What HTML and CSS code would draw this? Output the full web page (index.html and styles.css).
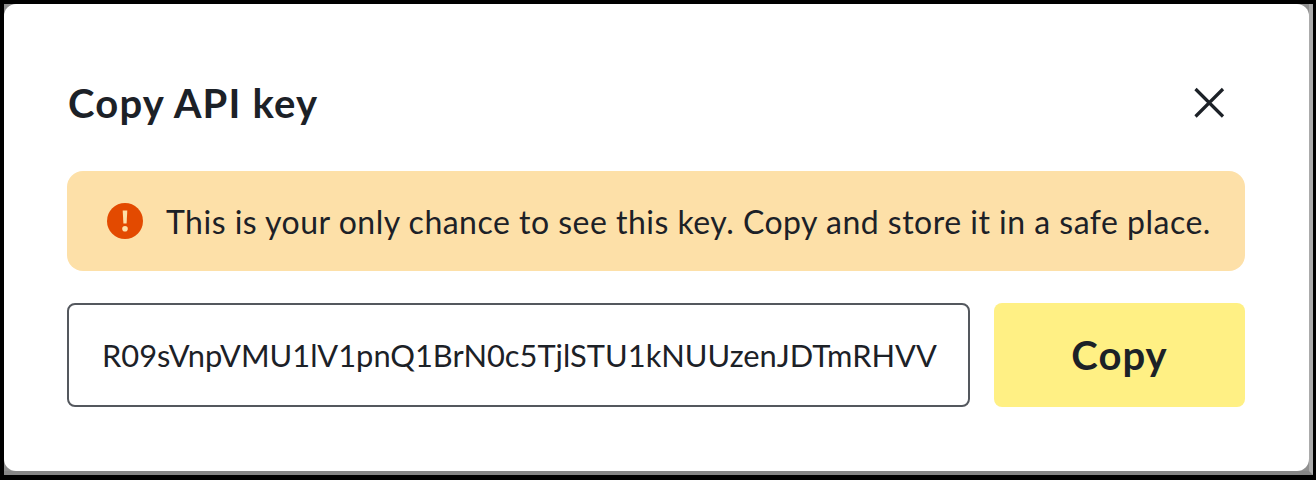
FILE: index.html
```html
<!DOCTYPE html>
<html lang="en">
<head>
<meta charset="UTF-8">
<title>Copy API key</title>
<link rel="stylesheet" href="styles.css">
</head>
<body>
  <div class="frame">
    <section class="modal">
      <div class="modal-header">
        <h2 class="modal-title">Copy API key</h2>
        <button class="close-btn" aria-label="Close">
          <svg width="32" height="32" viewBox="0 0 32 32"><path d="M2.5 2L30 29.5M30 2L2.5 29.5" fill="none" stroke="#1c2127" stroke-width="3.2"/></svg>
        </button>
      </div>
      <div class="warning">
        <svg class="warning-icon" width="36" height="36" viewBox="0 0 36 36">
          <circle cx="18" cy="18" r="18" fill="#e34a00"/>
          <path d="M15.7 7.5h4.6l-.7 13h-3.2z" fill="#fde0a8"/>
          <circle cx="18" cy="25.8" r="2.8" fill="#fde0a8"/>
        </svg>
        <span>This is your only chance to see this key. Copy and store it in a safe place.</span>
      </div>
      <div class="key-row">
        <input class="key-input" type="text" readonly value="R09sVnpVMU1lV1pnQ1BrN0c5TjlSTU1kNUUzenJDTmRHVV">
        <button class="copy-btn">Copy</button>
      </div>
    </section>
  </div>
</body>
</html>
```

FILE: styles.css
```css
:root {
  --text: #1c2127;
  --warning-bg: #fde0a8;
  --copy-bg: #fff084;
}

* {
  margin: 0;
  padding: 0;
  box-sizing: border-box;
  font-family: "Lato", sans-serif;
}

html, body {
  height: 480px;
  overflow: hidden;
}

body {
  background-color: #000;
  color: var(--text);
  padding: 4px 3px 5px 4px;
}

/* grey window edge that shows behind the rounded corners */
.frame {
  height: 471px;
  background-color: #8f8f8f;
  border-right: 4px solid #ababab;
  border-bottom: 4px solid #868686;
}

.modal {
  height: 100%;
  background-color: #fff;
  border-radius: 12px;
  padding: 64px 64px 0 63px;
}

.modal-header {
  display: flex;
  justify-content: space-between;
  align-items: center;
  height: 70px;
  margin-bottom: 33px;
}

.modal-title {
  margin-left: 1px;
  font-size: 40px;
  font-weight: 700;
  letter-spacing: 1.2px;
}

.close-btn {
  width: 32px;
  height: 32px;
  margin-right: 20px;
  border: none;
  background: none;
  cursor: pointer;
}

.warning {
  display: flex;
  align-items: center;
  gap: 23px;
  height: 100px;
  padding: 0 30px 0 40px;
  background-color: var(--warning-bg);
  border-radius: 16px;
  font-size: 32px;
  letter-spacing: 0.49px;
}

.warning-icon {
  flex-shrink: 0;
}

.key-row {
  display: flex;
  gap: 24px;
  margin-top: 32px;
}

.key-input {
  flex: 1;
  height: 104px;
  padding: 0 28px 0 33px;
  border: 2px solid #54585e;
  border-radius: 8px;
  color: var(--text);
  font-size: 30.85px;
  outline: none;
}

.copy-btn {
  width: 251px;
  height: 104px;
  border: none;
  border-radius: 8px;
  background-color: var(--copy-bg);
  color: var(--text);
  font-size: 40px;
  font-weight: 700;
  letter-spacing: 1px;
  cursor: pointer;
}
```
